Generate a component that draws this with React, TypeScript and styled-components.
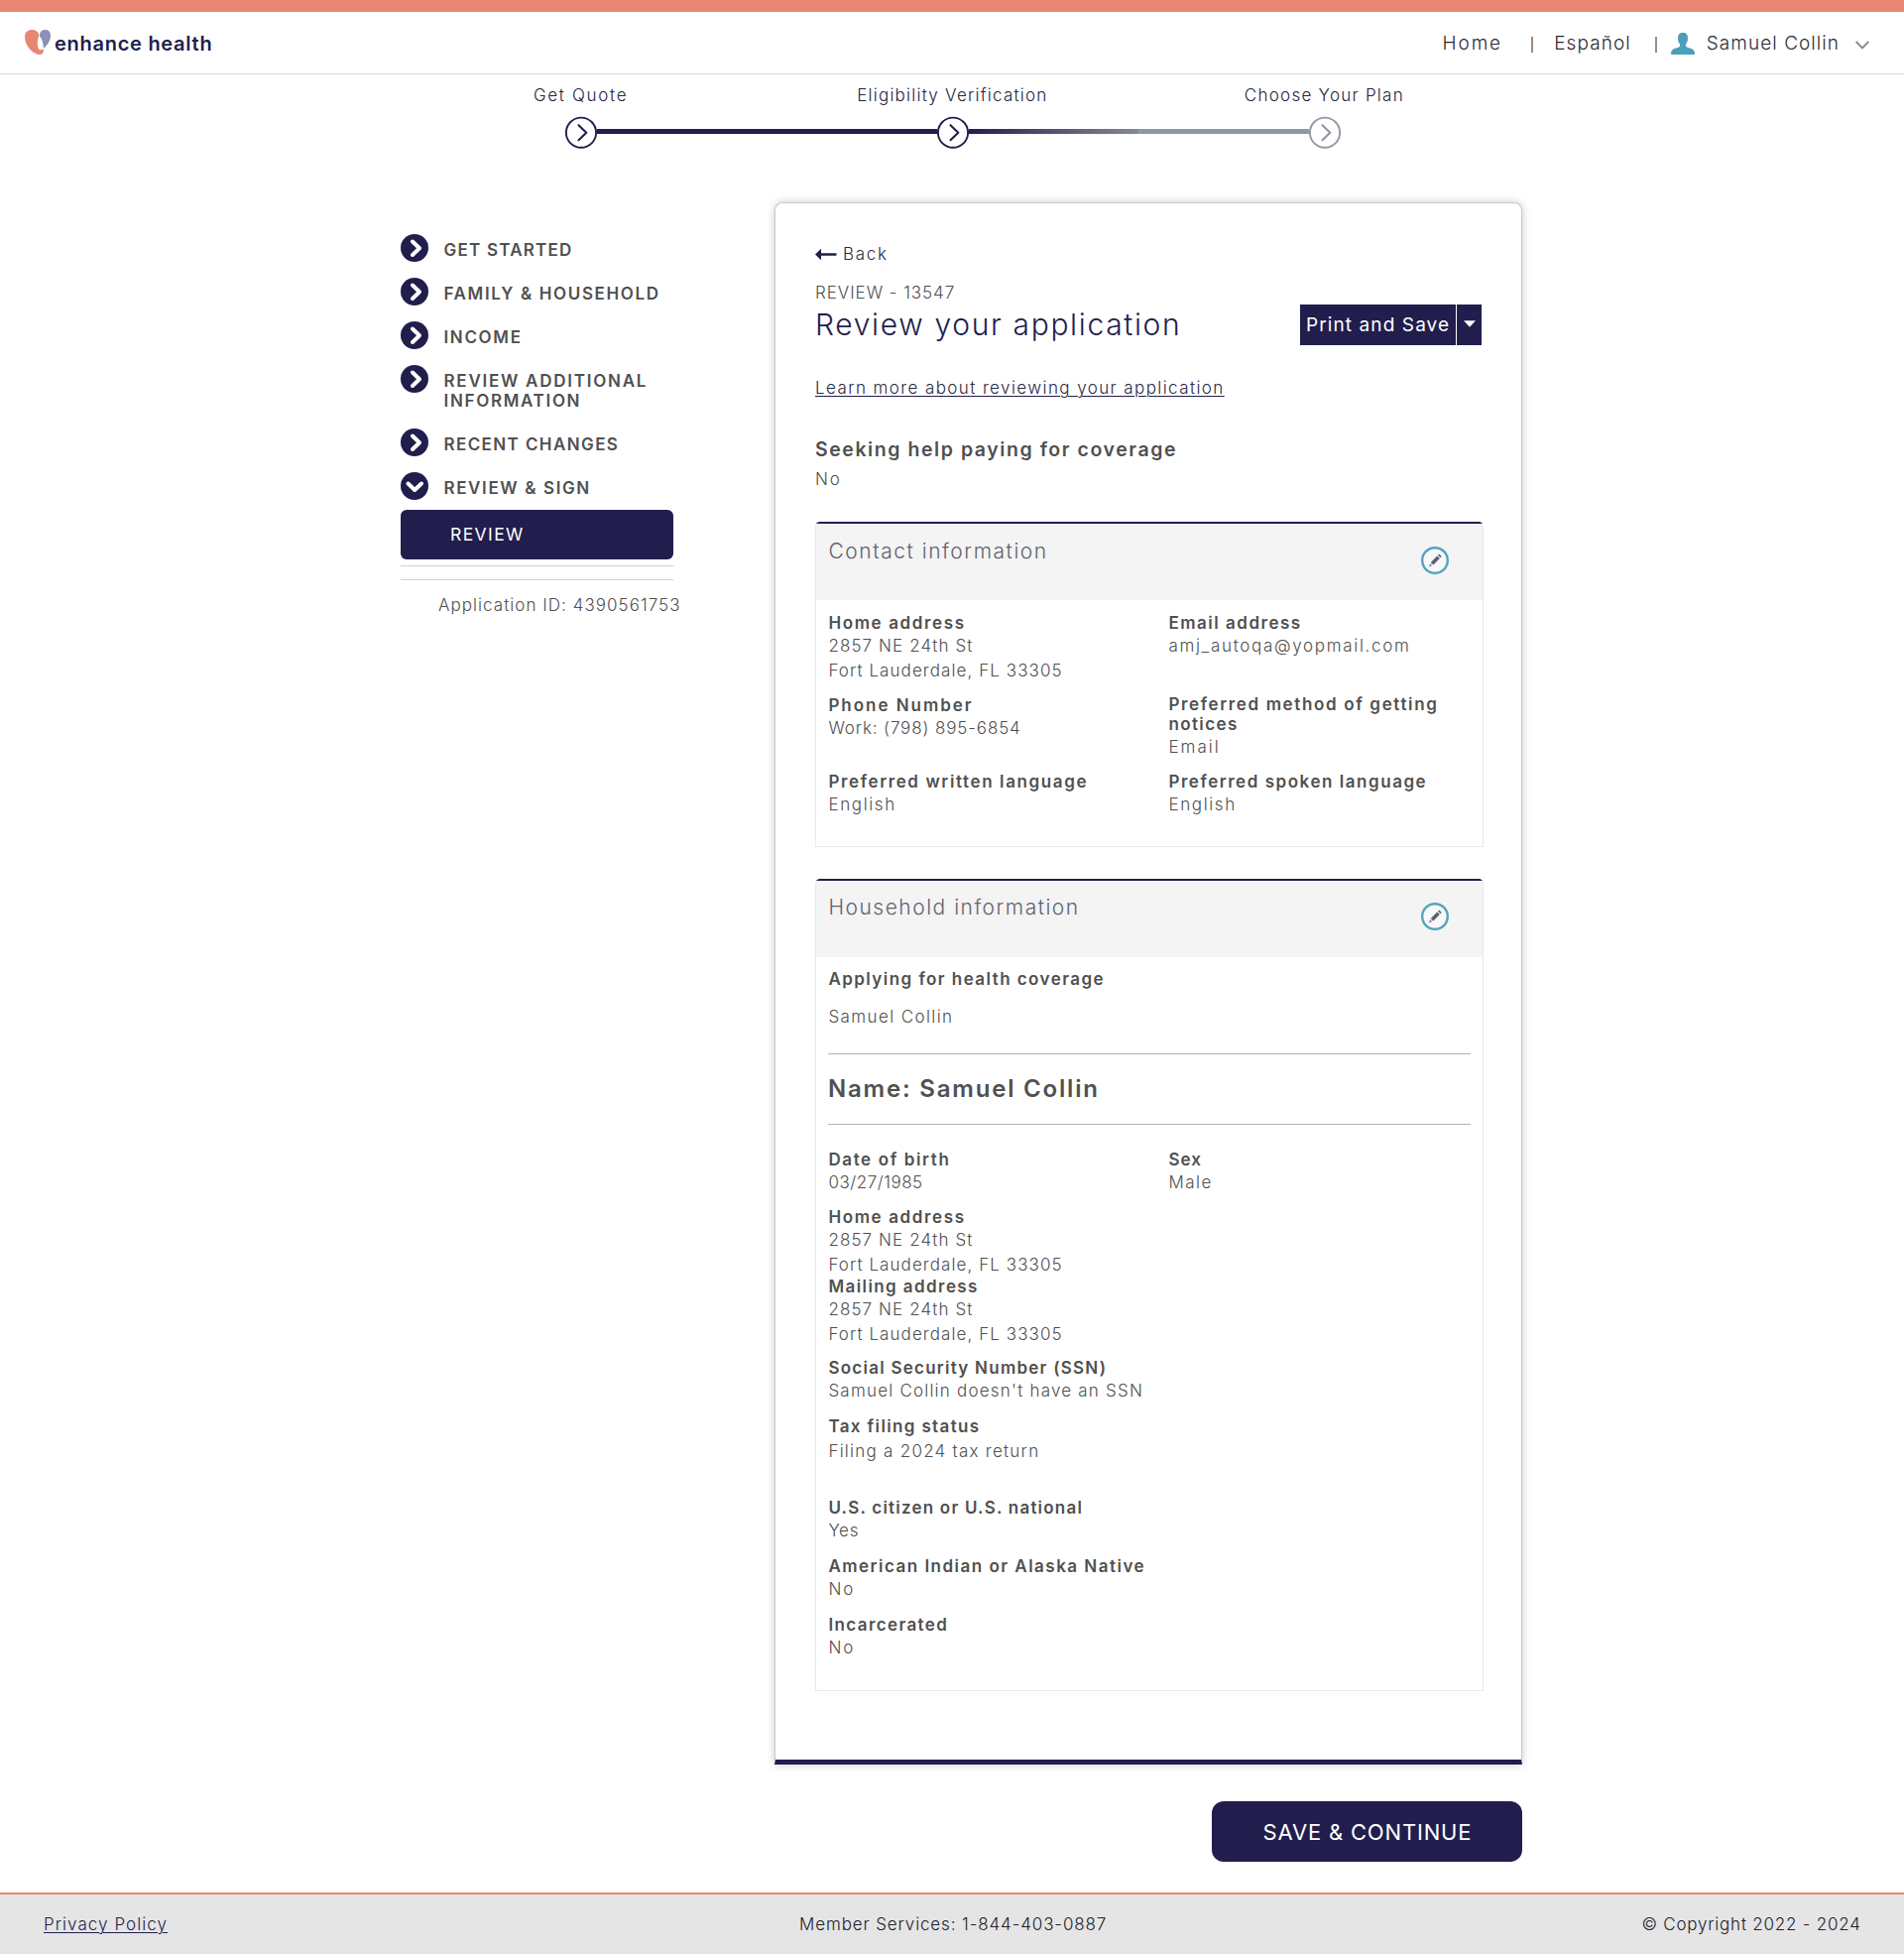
import React from 'react';
import styled, { createGlobalStyle, css } from 'styled-components';

const navy = '#211e4d';
const coral = '#e68673';
const body = '#505050';

const GlobalStyle = createGlobalStyle`
  *, *::before, *::after { box-sizing: border-box; }
  body {
    margin: 0;
    background: #fff;
    color: ${body};
    font-family: Inter, 'Open Sans', sans-serif;
    font-size: 17px;
    font-weight: 300;
  }
`;

const Page = styled.div`
  display: flex;
  flex-direction: column;
  width: 1920px;
  height: 1970px;
`;

const Tracked = styled.span<{ $ls: number }>`
  letter-spacing: ${(p) => p.$ls}px;
  margin-right: ${(p) => -p.$ls}px;
  white-space: nowrap;
`;

/* Header */

const Header = styled.header`
  flex: none;
  display: flex;
  align-items: flex-start;
  justify-content: space-between;
  height: 75px;
  border-top: 12px solid ${coral};
  border-bottom: 1px solid #d5d7d7;
  padding: 18px 35px 0 25px;
`;

const Brand = styled.a`
  display: flex;
  color: ${navy};
  font-size: 20px;
  font-weight: 600;
  line-height: 29px;
`;

const BrandName = styled.span`
  margin: 0 0 0 4px;
  letter-spacing: 0.73px;
`;

const TopNav = styled.nav`
  display: flex;
  color: #2c2c34;
  font-size: 19px;
  line-height: 27px;
`;

const Divider = styled.span<{ $before: number; $after: number }>`
  width: 2px;
  height: 16px;
  margin: 7px ${(p) => p.$after}px 0 ${(p) => p.$before}px;
  background: #a08c7c;
`;

const UserIcon = styled.svg`
  margin: 3px 12px 0 0;
`;

const NavChevron = styled.svg`
  margin: 11px 0 0 17px;
`;

/* Progress */

const Steps = styled.ol`
  flex: none;
  display: flex;
  list-style: none;
  margin: 0;
  padding: 11px 0 0 398px;
  height: 129px;
`;

const Step = styled.li`
  display: flex;
  flex-direction: column;
  align-items: center;
  width: 375px;
  color: #25253f;
  line-height: 20px;
`;

const StepLabel = styled.div`
  padding-right: 1.5px;
`;

const StepTrack = styled.div`
  display: grid;
  grid-template-columns: 1fr 32px 1fr;
  align-items: start;
  width: 100%;
  margin-top: 11px;
`;

const StepLine = styled.div<{ $fill: string }>`
  height: 5px;
  margin-top: 13px;
  background: ${(p) => p.$fill};
`;

/* Main columns */

const Main = styled.main`
  flex: 1;
  display: flex;
  align-items: flex-start;
  padding-left: 404px;
`;

const Sidebar = styled.aside`
  width: 275px;
  margin: 32px 102px 0 0;
`;

const MenuItem = styled.div<{ $tall?: boolean }>`
  display: flex;
  height: ${(p) => (p.$tall ? 64 : 44)}px;
`;

const MenuLabel = styled.div`
  display: flex;
  flex-direction: column;
  margin: 6px 0 0 15.5px;
  font-weight: 600;
  line-height: 20px;
`;

const ActiveItem = styled.div`
  height: 50px;
  margin-top: -6px;
  padding-left: 50px;
  border-radius: 6px;
  background: ${navy};
  color: #fff;
  font-size: 17.5px;
  font-weight: 400;
  line-height: 50px;
`;

const SideRule = styled.div<{ $gap: number }>`
  height: 1px;
  margin-top: ${(p) => p.$gap}px;
  background: #cfd4d3;
`;

const ApplicationId = styled.div`
  margin: 15px 0 0 38px;
  line-height: 20px;
  white-space: nowrap;
`;

const Content = styled.section`
  width: 754px;
`;

const Card = styled.div`
  height: 1575px;
  border: 1px solid #c8c8c8;
  border-bottom: 5px solid ${navy};
  border-radius: 8px 8px 0 0;
  padding: 41px 38px 0 40px;
  box-shadow: 0 0 8px rgba(0, 0, 0, 0.22);
`;

const BackLink = styled.a`
  display: flex;
  color: #2b2a45;
  line-height: 20px;
`;

const BackArrow = styled.svg`
  margin: 4px 6px 0 0;
`;

const TitleRow = styled.div`
  display: flex;
  justify-content: space-between;
  padding-top: 19px;
`;

const Crumb = styled.div`
  line-height: 20px;
`;

const Title = styled.h1`
  margin: 5px 0 0;
  color: ${navy};
  font-size: 30px;
  font-weight: 300;
  line-height: 35px;
`;

const SplitButton = styled.div`
  display: flex;
  gap: 1px;
  height: 41px;
  margin: 22px 2px 0 0;
  color: #fff;
  font-size: 19px;
  font-weight: 400;
  line-height: 40px;
`;

const SplitMain = styled.button`
  width: 157px;
  padding: 0 0 0 6px;
  border: 0;
  background: ${navy};
  color: inherit;
  font: inherit;
  text-align: left;
`;

const SplitToggle = styled.button`
  display: flex;
  align-items: center;
  justify-content: center;
  width: 25px;
  padding: 0 0 2px;
  border: 0;
  background: ${navy};
`;

const LearnMore = styled.a`
  display: block;
  width: 413px;
  margin-top: 33px;
  color: #2b2a45;
  line-height: 20px;
  text-decoration: underline;
  text-decoration-color: ${navy};
  text-decoration-thickness: 1px;
  text-underline-offset: 2px;
`;

const Question = styled.h2`
  margin: 39px 0 0;
  font-size: 19.5px;
  font-weight: 600;
  line-height: 26px;
`;

const Answer = styled.div`
  margin-top: 7px;
  line-height: 20px;
`;

/* Review panels */

const Panel = styled.section<{ $gap: number; $height: number }>`
  height: ${(p) => p.$height}px;
  margin-top: ${(p) => p.$gap}px;
  border: 1px solid #e6eaea;
  border-top: 2px solid ${navy};
  border-radius: 5px 5px 0 0;
`;

const PanelHead = styled.header<{ $top: number }>`
  display: flex;
  align-items: flex-start;
  justify-content: space-between;
  height: 77px;
  padding: ${(p) => p.$top}px 34px 0 12.5px;
  background: #f4f4f4;
  color: #62626e;
  font-size: 21px;
  line-height: 24px;
`;

const EditIcon = styled.svg`
  margin-top: 7px;
`;

const PanelBody = styled.div`
  padding: 0 12px;
`;

const Columns = styled.div<{ $gap: number }>`
  display: grid;
  grid-template-columns: 343px 1fr;
  margin-top: ${(p) => p.$gap}px;
`;

const Field = styled.dl<{ $gap?: number; $valueGap?: number }>`
  margin: ${(p) => p.$gap ?? 0}px 0 0;
  dt, dd { display: flex; flex-direction: column; padding-left: 0.4px; }
  dt { font-weight: 600; line-height: 20px; }
  dd {
    margin: ${(p) => p.$valueGap ?? 1}px 0 -1px;
    line-height: 25px;
  }
`;

const PersonName = styled.h3`
  margin: 20px 0;
  font-size: 24px;
  font-weight: 600;
  line-height: 30px;
`;

const Rule = styled.hr<{ $gap?: number }>`
  height: 1px;
  margin: ${(p) => p.$gap ?? 0}px 0 0;
  border: 0;
  background: #b2b2b2;
`;

const SaveButton = styled.button`
  display: block;
  width: 313px;
  height: 61px;
  margin: 37px 0 0 441px;
  padding: 1px 0 0;
  border: 0;
  border-radius: 12px;
  background: ${navy};
  color: #fff;
  font: 400 22px/60px Inter, 'Open Sans', sans-serif;
`;

/* Footer */

const footerText = css`
  color: #22222a;
  font-size: 17px;
  line-height: 20px;
`;

const Footer = styled.footer`
  flex: none;
  display: flex;
  justify-content: space-between;
  height: 62px;
  border-top: 2px solid ${coral};
  padding: 20px 44px 0 44px;
  background: #e5e5e5;
  ${footerText}
`;

const PrivacyLink = styled.a`
  width: 125px;
  height: 20px;
  margin-right: 97px;
  color: ${navy};
  text-decoration: underline;
  text-decoration-thickness: 1px;
  text-underline-offset: 2px;
`;

type Text = [string, number];

const T = ({ t }: { t: Text }) => <Tracked $ls={t[1]}>{t[0]}</Tracked>;

const Logo = () => (
  <svg width="26" height="26" viewBox="0 0 26 26">
    <path d="M0 7C0 2 3.500 0 7.500 0C11.500 0 14.200 2.200 14.200 6.500C12.500 10 12.500 14 13.200 17.500C14 20.500 16 21 17.800 19.800L18.800 19.500C19.300 22.500 17.800 25 15 25C9 25 0 17 0 7Z" fill={coral} />
    <path d="M14.700 6C15.500 1.500 17.500 0 20.500 0C24 0 26.300 2 26 6.500C25.700 11.500 22.500 16 18.800 18.800C18.800 14 17.800 10 14.700 6Z" fill="#8b90b5" />
  </svg>
);

const StepMark = ({ color }: { color: string }) => (
  <svg width="32" height="33" viewBox="0 0 32 33" fill="none" stroke={color} strokeLinecap="round" strokeLinejoin="round">
    <circle cx="16" cy="16.700" r="15.100" strokeWidth="1.900" />
    <path d="M13.500 9.200L21.300 16.700L13.500 24.200" strokeWidth="2.100" />
  </svg>
);

const MenuMark = ({ open }: { open?: boolean }) => (
  <svg width="28" height="28" viewBox="0 0 28 28" fill="none">
    <circle cx="14" cy="14" r="14" fill={navy} />
    <path
      d={open ? 'M7.500 11.500L14.200 18L21 11.500' : 'M12 7.500L19 14.200L12 21'}
      stroke="#fff"
      strokeWidth="4"
      strokeLinecap="round"
      strokeLinejoin="round"
    />
  </svg>
);

const Edit = () => (
  <EditIcon width="28" height="28" viewBox="0 0 28 28">
    <circle cx="14" cy="14" r="12.800" fill="#f7f8f8" stroke="#53a5bd" strokeWidth="2.400" />
    <path d="M9.800 15.900L16.200 9.500L18.800 12.100L12.400 18.500Z" fill="#5c606e" />
    <path d="M17 8.700L18.300 7.500L20.700 9.900L19.500 11.200Z" fill="#5c606e" />
    <path d="M9.100 17L11.300 19.200L7.700 20.600Z" fill="#8a8d96" />
  </EditIcon>
);

const menu: { lines: Text[]; open?: boolean }[] = [
  { lines: [['GET STARTED', 1.22]] },
  { lines: [['FAMILY & HOUSEHOLD', 1.63]] },
  { lines: [['INCOME', 1.65]] },
  { lines: [['REVIEW ADDITIONAL', 1.75], ['INFORMATION', 1.68]] },
  { lines: [['RECENT CHANGES', 1.4]] },
  { lines: [['REVIEW & SIGN', 1.62]], open: true },
];

interface InfoProps {
  label: Text[];
  value: Text[];
  gap?: number;
  valueGap?: number;
}

const Info = ({ label, value, gap, valueGap }: InfoProps) => (
  <Field $gap={gap} $valueGap={valueGap}>
    <dt>{label.map((t) => <T key={t[0]} t={t} />)}</dt>
    <dd>{value.map((t) => <T key={t[0]} t={t} />)}</dd>
  </Field>
);

const address: Text[] = [['2857 NE 24th St', 1.1], ['Fort Lauderdale, FL 33305', 1.08]];

export default function App() {
  return (
    <Page>
      <GlobalStyle />
      <Header>
        <Brand>
          <Logo />
          <BrandName>enhance health</BrandName>
        </Brand>
        <TopNav>
          <T t={['Home', 1.9]} />
          <Divider $before={31} $after={21} />
          <T t={['Español', 1.1]} />
          <Divider $before={25} $after={14} />
          <UserIcon width="24" height="22" viewBox="0 0 24 22" fill="#4aa0ba">
            <path d="M12 0C15.500 0 17 2 17 5.500C17 8.500 16.200 10 15 11.500C14.500 14 15.500 14.500 18 15.200C22 16.300 24 17 24 22H0C0 17 2 16.300 6 15.200C8.500 14.500 9.500 14 9 11.500C7.800 10 7 8.500 7 5.500C7 2 8.500 0 12 0Z" />
          </UserIcon>
          <T t={['Samuel Collin', 1.05]} />
          <NavChevron width="14" height="9" viewBox="0 0 14 9" fill="none" stroke="#8b8b8b" strokeWidth="2">
            <path d="M0.700 1L7 7.400L13.300 1" />
          </NavChevron>
        </TopNav>
      </Header>

      <Steps>
        <Step>
          <StepLabel><T t={['Get Quote', 1.7]} /></StepLabel>
          <StepTrack>
            <StepLine $fill="transparent" />
            <StepMark color={navy} />
            <StepLine $fill={navy} />
          </StepTrack>
        </Step>
        <Step>
          <StepLabel><T t={['Eligibility Verification', 1.24]} /></StepLabel>
          <StepTrack>
            <StepLine $fill={navy} />
            <StepMark color={navy} />
            <StepLine $fill={`linear-gradient(90deg, ${navy}, #848a94)`} />
          </StepTrack>
        </Step>
        <Step>
          <StepLabel><T t={['Choose Your Plan', 1.26]} /></StepLabel>
          <StepTrack>
            <StepLine $fill="#8f98a4" />
            <StepMark color="#8f98a4" />
            <StepLine $fill="transparent" />
          </StepTrack>
        </Step>
      </Steps>

      <Main>
        <Sidebar>
          {menu.map(({ lines, open }) => (
            <MenuItem key={lines[0][0]} $tall={lines.length > 1}>
              <MenuMark open={open} />
              <MenuLabel>{lines.map((t) => <T key={t[0]} t={t} />)}</MenuLabel>
            </MenuItem>
          ))}
          <ActiveItem><T t={['REVIEW', 1.4]} /></ActiveItem>
          <SideRule $gap={6} />
          <SideRule $gap={13} />
          <ApplicationId><T t={['Application ID: 4390561753', 1.04]} /></ApplicationId>
        </Sidebar>

        <Content>
          <Card>
            <BackLink>
              <BackArrow width="22" height="13" viewBox="0 0 22 13" fill={navy}>
                <path d="M0 6.500L6 0.800V5.200H21.500V7.800H6V12.200Z" />
              </BackArrow>
              <T t={['Back', 1.7]} />
            </BackLink>
            <TitleRow>
              <div>
                <Crumb><T t={['REVIEW - 13547', 0.95]} /></Crumb>
                <Title><T t={['Review your application', 1.66]} /></Title>
              </div>
              <SplitButton>
                <SplitMain><T t={['Print and Save', 1.1]} /></SplitMain>
                <SplitToggle>
                  <svg width="12" height="7" viewBox="0 0 12 7" fill="#fff"><path d="M0 0.300H12L6 6.700Z" /></svg>
                </SplitToggle>
              </SplitButton>
            </TitleRow>
            <LearnMore><T t={['Learn more about reviewing your application', 1.41]} /></LearnMore>
            <Question><T t={['Seeking help paying for coverage', 1.56]} /></Question>
            <Answer><T t={['No', 1.9]} /></Answer>

            <Panel $gap={33} $height={328}>
              <PanelHead $top={16}>
                <T t={['Contact information', 1.54]} />
                <Edit />
              </PanelHead>
              <PanelBody>
                <Columns $gap={13}>
                  <Info label={[['Home address', 1.63]]} value={address} />
                  <Info label={[['Email address', 1.51]]} value={[['amj_autoqa@yopmail.com', 1.69]]} />
                </Columns>
                <Columns $gap={12}>
                  <Info gap={1} label={[['Phone Number', 1.97]]} value={[['Work: (798) 895-6854', 0.87]]} />
                  <Info
                    label={[['Preferred method of getting', 1.64], ['notices', 1.4]]}
                    value={[['Email', 2.05]]}
                  />
                </Columns>
                <Columns $gap={13}>
                  <Info label={[['Preferred written language', 1.62]]} value={[['English', 1.63]]} />
                  <Info label={[['Preferred spoken language', 1.54]]} value={[['English', 1.63]]} />
                </Columns>
              </PanelBody>
            </Panel>

            <Panel $gap={32} $height={819}>
              <PanelHead $top={15}>
                <T t={['Household information', 1.5]} />
                <Edit />
              </PanelHead>
              <PanelBody>
                <Info gap={12} valueGap={16} label={[['Applying for health coverage', 1.45]]} value={[['Samuel Collin', 1.4]]} />
                <Rule $gap={25} />
                <PersonName><T t={['Name: Samuel Collin', 1.8]} /></PersonName>
                <Rule />
                <Columns $gap={25}>
                  <Info label={[['Date of birth', 1.62]]} value={[['03/27/1985', 0.53]]} />
                  <Info label={[['Sex', 1.1]]} value={[['Male', 1.5]]} />
                </Columns>
                <Info gap={13} label={[['Home address', 1.63]]} value={address} />
                <Info label={[['Mailing address', 1.42]]} value={address} />
                <Info gap={12} label={[['Social Security Number (SSN)', 1.25]]} value={[["Samuel Collin doesn't have an SSN", 1.21]]} />
                <Info gap={14} valueGap={3} label={[['Tax filing status', 1.36]]} value={[['Filing a 2024 tax return', 1.25]]} />
                <Info gap={35} label={[['U.S. citizen or U.S. national', 1.22]]} value={[['Yes', 0.7]]} />
                <Info gap={14} label={[['American Indian or Alaska Native', 1.49]]} value={[['No', 1.9]]} />
                <Info gap={14} label={[['Incarcerated', 1.4]]} value={[['No', 1.9]]} />
              </PanelBody>
            </Panel>
          </Card>
          <SaveButton><T t={['SAVE & CONTINUE', 0.82]} /></SaveButton>
        </Content>
      </Main>

      <Footer>
        <PrivacyLink><T t={['Privacy Policy', 1.06]} /></PrivacyLink>
        <T t={['Member Services: 1-844-403-0887', 0.88]} />
        <T t={['© Copyright 2022 - 2024', 0.78]} />
      </Footer>
    </Page>
  );
}
